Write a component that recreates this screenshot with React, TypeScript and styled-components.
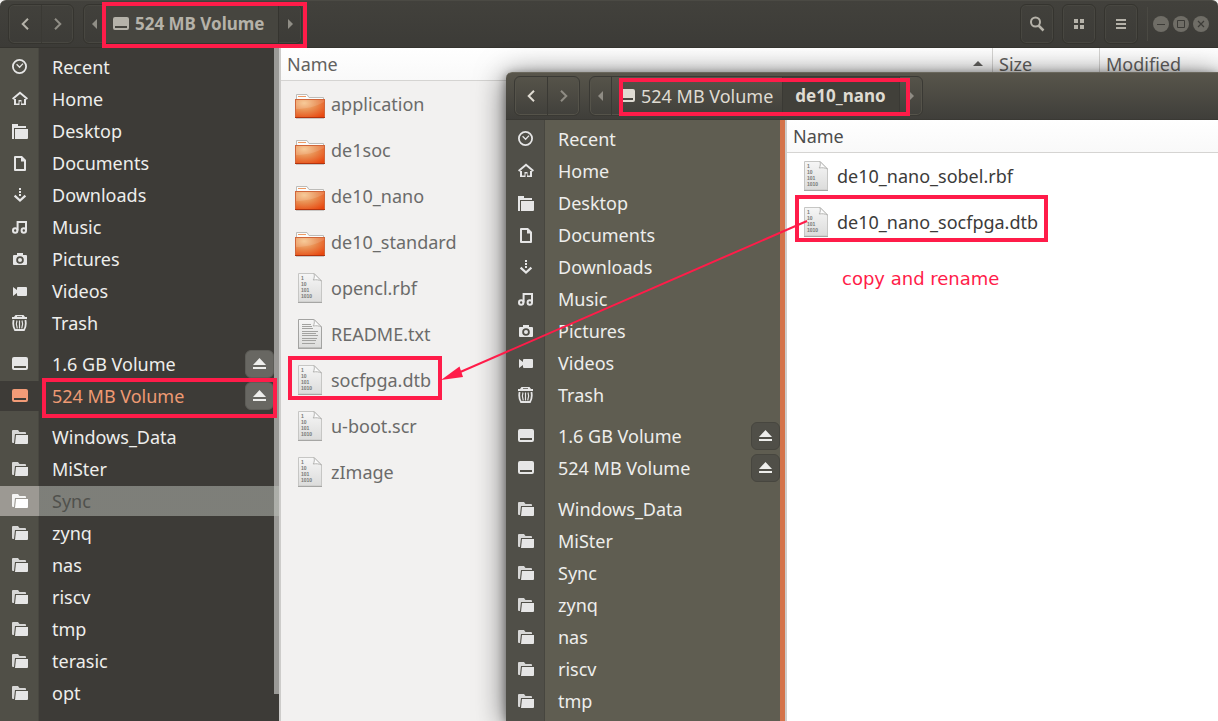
import React from "react";
import styled, { createGlobalStyle, css } from "styled-components";

const RED = "#ff1c49";

const GlobalStyle = createGlobalStyle`
  *, *::before, *::after { box-sizing: border-box; }
  body {
    margin: 0;
    font-family: "Noto Sans", "Open Sans", sans-serif;
    font-size: 18px;
    line-height: 24px;
    background: #f2f1f0;
  }
  button { font: inherit; color: inherit; border: 0; padding: 0; background: none; }
  ul { list-style: none; margin: 0; padding: 0; }
  a { color: inherit; text-decoration: none; }
  svg { display: block; flex: none; }
`;

type Tone = "back" | "front";

const tones = {
  back: {
    header: "linear-gradient(#42413c, #3c3b37)",
    headerTop: "#4b4a44",
    headerText: "#b5b2a9",
    headerDim: "#908e86",
    line: "#35342f",
    glow: "#484741",
    active: "#46453f",
    rail: "#504f47",
    railLine: "#484740",
    side: "#3d3b37",
    eject: "#686762",
    ejectLine: "#5d5c57",
    scroll: "#9b9a97",
    list: "#f2f1f0",
    fileText: "#6b6b6a",
    columnText: "#62615f",
  },
  front: {
    header: "linear-gradient(#58554b, #3f3e3a)",
    headerTop: "#6a675c",
    headerText: "#dfdbd2",
    headerDim: "#8f8c84",
    line: "#3a3934",
    glow: "#55534a",
    active: "#41403a",
    rail: "#504f48",
    railLine: "#47463f",
    side: "#5f5d51",
    eject: "#504f48",
    ejectLine: "#47463f",
    scroll: "#d4734a",
    list: "#ffffff",
    fileText: "#3c3b3a",
    columnText: "#4c4c4c",
  },
};

const Desktop = styled.main`
  position: relative;
  height: 100vh;
  overflow: hidden;
`;

const Window = styled.section<{ $tone: Tone }>`
  display: flex;
  flex-direction: column;
  height: 100%;
  ${(p) =>
    p.$tone === "front" &&
    css`
      position: absolute;
      top: 72px;
      left: 506px;
      right: 0;
      bottom: 0;
      height: auto;
      border-top-left-radius: 6px;
      box-shadow: 0 4px 30px rgba(0, 0, 0, 0.6), 0 2px 10px rgba(0, 0, 0, 0.4);
    `}
`;

const HeaderBar = styled.header<{ $tone: Tone }>`
  display: flex;
  align-items: center;
  gap: 9px;
  flex: none;
  height: 48px;
  padding: 0 9px 0 8px;
  color: ${(p) => tones[p.$tone].headerText};
  background: ${(p) => tones[p.$tone].header};
  border-top: 1px solid ${(p) => tones[p.$tone].headerTop};
  border-bottom: 1px solid ${(p) => tones[p.$tone].line};
  border-radius: 6px ${(p) => (p.$tone === "back" ? "6px" : "0")} 0 0;
`;

const ButtonGroup = styled.div<{ $tone: Tone }>`
  display: flex;
  height: 40px;
  border: 1px solid ${(p) => tones[p.$tone].line};
  border-radius: 6px;
  box-shadow: inset 0 0 0 1px ${(p) => tones[p.$tone].glow};
  overflow: hidden;
`;

const HeaderButton = styled.button<{ $tone: Tone; $dim?: boolean; $width?: number }>`
  display: flex;
  align-items: center;
  justify-content: center;
  width: ${(p) => p.$width ?? 32}px;
  color: ${(p) => (p.$dim ? tones[p.$tone].headerDim : "inherit")};
  & + & { border-left: 1px solid ${(p) => tones[p.$tone].line}; }
`;

const Crumb = styled.button<{ $tone: Tone; $active?: boolean; $drive?: boolean }>`
  display: flex;
  align-items: center;
  gap: 6px;
  padding: 0 9px 0 ${(p) => (p.$drive ? 7 : 12)}px;
  border-left: 1px solid ${(p) => tones[p.$tone].line};
  white-space: nowrap;
  ${(p) =>
    p.$active &&
    css`
      padding-right: 13px;
      border-right: 1px solid ${tones[p.$tone].line};
      font-size: 17px;
      font-weight: 700;
      background: ${tones[p.$tone].active};
    `}
`;

const Spacer = styled.div`
  flex: 1;
`;

const Tools = styled.div`
  display: flex;
  align-items: center;
  gap: 8px;
`;

const WindowControls = styled.div`
  display: flex;
  align-items: center;
  gap: 4px;
  padding-left: 5px;
  height: 34px;
  border-left: 1px solid #4a4943;
`;

const ControlButton = styled.button`
  display: flex;
  align-items: center;
  justify-content: center;
  width: 16px;
  height: 16px;
  border-radius: 50%;
  color: #3c3b37;
  background: #6f6d66;
`;

const Body = styled.div`
  display: flex;
  flex: 1;
  min-height: 0;
`;

const Sidebar = styled.nav<{ $tone: Tone }>`
  position: relative;
  flex: none;
  width: 281px;
  padding-top: 4px;
  overflow: hidden;
  border-right: 2px solid #cdccca;
  color: #eeeeec;
  background: ${(p) => {
    const t = tones[p.$tone];
    return `linear-gradient(to right, ${t.rail} 38px, ${t.railLine} 38px, ${t.railLine} 39px, ${t.side} 39px)`;
  }};
`;

const ScrollThumb = styled.div<{ $tone: Tone }>`
  position: absolute;
  top: 0;
  right: 0;
  width: 5px;
  height: ${(p) => (p.$tone === "back" ? "96%" : "100%")};
  background: ${(p) => tones[p.$tone].scroll};
`;

const PlaceGroup = styled.ul`
  position: relative;
  display: flex;
  flex-direction: column;
  gap: 2px;
  margin-bottom: 11px;
`;

const PlaceRow = styled.li<{ $state?: "active" | "target" }>`
  display: flex;
  align-items: center;
  height: 30px;
  padding-right: 5px;
  ${(p) => p.$state === "active" && `color: #ee9a73;`}
  ${(p) =>
    p.$state === "target" &&
    `background: linear-gradient(to right, #9c9993 39px, rgba(190, 194, 187, 0.5) 39px);`}
`;

const PlaceLink = styled.a<{ $state?: "active" | "target" }>`
  display: flex;
  align-items: center;
  flex: 1;
  gap: 13px;
  height: 30px;
  ${(p) => p.$state === "target" && `color: #50514d;`}
`;

const PlaceIcon = styled.span<{ $state?: "active" | "target" }>`
  display: flex;
  align-items: center;
  width: 39px;
  height: 30px;
  padding-left: 12px;
  color: ${(p) => (p.$state === "active" ? "#f29b77" : p.$state === "target" ? "#ffffff" : "#e6e6e6")};
  ${(p) => p.$state === "active" && `background: #3d3b37;`}
`;

const EjectButton = styled.button<{ $tone: Tone }>`
  display: flex;
  align-items: center;
  justify-content: center;
  width: 29px;
  height: 28px;
  border: 1px solid ${(p) => tones[p.$tone].ejectLine};
  border-radius: 6px;
  background: ${(p) => tones[p.$tone].eject};
`;

const FilePane = styled.div<{ $tone: Tone }>`
  flex: 1;
  min-width: 0;
  background: ${(p) => tones[p.$tone].list};
`;

const FileTable = styled.table<{ $tone: Tone }>`
  width: 100%;
  table-layout: fixed;
  border-collapse: separate;
  border-spacing: 0;
  color: ${(p) => tones[p.$tone].fileText};
`;

const ColumnHead = styled.th<{ $tone: Tone; $width?: number }>`
  width: ${(p) => (p.$width ? `${p.$width}px` : "auto")};
  height: 33px;
  padding: 0 6px;
  font-weight: 400;
  text-align: left;
  color: ${(p) => tones[p.$tone].columnText};
  background: linear-gradient(#ffffff, #f9f9f9);
  border-bottom: 1px solid #d5d4d2;
  & + & { border-left: 1px solid #d5d4d2; }
`;

const HeadContent = styled.div`
  display: flex;
  align-items: center;
  justify-content: space-between;
  padding-right: 3px;
`;

const FileCell = styled.td`
  height: 46px;
  padding: 0 0 0 14px;
`;

const FileName = styled.div`
  display: flex;
  align-items: center;
  gap: 6px;
  white-space: nowrap;
`;

const FileIconBox = styled.span`
  display: flex;
  justify-content: center;
  width: 30px;
`;

const Annotations = styled.div`
  position: absolute;
  inset: 0;
  pointer-events: none;
`;

const Frame = styled.div<{ $x: number; $y: number; $w: number; $h: number }>`
  position: absolute;
  left: ${(p) => p.$x}px;
  top: ${(p) => p.$y}px;
  width: ${(p) => p.$w}px;
  height: ${(p) => p.$h}px;
  border: 4px solid ${RED};
`;

const Arrow = styled.svg`
  position: absolute;
  left: 440px;
  top: 216px;
`;

const Note = styled.p`
  position: absolute;
  left: 842px;
  top: 267px;
  margin: 0;
  font-family: "DejaVu Sans", sans-serif;
  color: ${RED};
  white-space: nowrap;
`;

const Icon = ({ children }: { children: React.ReactNode }) => (
  <svg width="16" height="16" viewBox="0 0 16 16" fill="currentColor" aria-hidden="true">
    {children}
  </svg>
);

const DriveShape = () => (
  <path
    fillRule="evenodd"
    d="M2 1h12a2 2 0 0 1 2 2v9a2 2 0 0 1-2 2H2a2 2 0 0 1-2-2V3a2 2 0 0 1 2-2zM2 10v2h12v-2z"
  />
);

const placeShapes: Record<string, React.ReactNode> = {
  recent: (
    <g fill="none" stroke="currentColor">
      <circle cx="7.500" cy="7.500" r="6.600" strokeWidth="1.800" />
      <path d="M4.600 5.200l3 3 3.400-3.600" strokeWidth="1.300" />
    </g>
  ),
  home: (
    <g>
      <path d="M.6 8L8 1.700 15.400 8" fill="none" stroke="currentColor" strokeWidth="2" />
      <path d="M2 8h2v4.500h2.500V9h3v3.500H12V8h2v6H9V10.500H7.500V14H2z" />
    </g>
  ),
  desktop: <path d="M0 1h6v2h8v2H2v11H0zM3 6h13v9a1 1 0 0 1-1 1H3z" />,
  documents: (
    <path fillRule="evenodd" d="M3 1h7l4 4v10a1 1 0 0 1-1 1H3a1 1 0 0 1-1-1V2a1 1 0 0 1 1-1zm1 2v11h8V6.500H9V3z" />
  ),
  downloads: (
    <g>
      <path d="M7 1h2v2H7zM7 4h2v2H7zM7 7h2v2H7z" />
      <path d="M2.600 8.600L8 13.600l5.400-5" fill="none" stroke="currentColor" strokeWidth="2.200" />
    </g>
  ),
  music: (
    <g fill="none" stroke="currentColor" strokeWidth="2">
      <circle cx="3.200" cy="11.500" r="2.200" />
      <circle cx="11.800" cy="11.500" r="2.200" />
      <path d="M5.600 11.500V3h8.400v8.500" />
    </g>
  ),
  pictures: (
    <path
      fillRule="evenodd"
      d="M5 2h6v2h3a1 1 0 0 1 1 1v8a1 1 0 0 1-1 1H2a1 1 0 0 1-1-1V5a1 1 0 0 1 1-1h3zM8 5.200a3.800 3.800 0 1 0 0 7.600 3.800 3.800 0 0 0 0-7.600zM8 7a2 2 0 1 1 0 4 2 2 0 0 1 0-4z"
    />
  ),
  videos: <path d="M1 4l4 3V5a1 1 0 0 1 1-1h8a1 1 0 0 1 1 1v7a1 1 0 0 1-1 1H6a1 1 0 0 1-1-1v-2l-4 3z" />,
  trash: (
    <g>
      <path d="M3.500 0h8L13 2h2v2H0V2h2zM5 1.200v.8h5v-.8z" fillRule="evenodd" />
      <path
        d="M1.600 5c-.8 4-.2 7.500 1.400 10h9c1.600-2.500 2.200-6 1.400-10"
        fill="none"
        stroke="currentColor"
        strokeWidth="1.800"
      />
      <path
        d="M5 5.500c-1 2.500-.8 5.500.3 8M7.500 5.500v8M10 5.500c1 2.500.8 5.500-.3 8"
        fill="none"
        stroke="currentColor"
        strokeWidth="1.200"
      />
    </g>
  ),
  drive: <DriveShape />,
  folder: (
    <g>
      <path d="M1 1h5l1.500 2H13a1 1 0 0 1 1 1v1H3L2 14H1a1 1 0 0 1-1-1V2a1 1 0 0 1 1-1z" opacity=".9" />
      <path d="M4 6h12v8a1 1 0 0 1-1 1H3z" />
    </g>
  ),
};

const EjectIcon = () => (
  <svg width="13" height="12" viewBox="0 0 13 12" fill="#eeeeec" aria-hidden="true">
    <path d="M6.500 0L13 7H0zM0 9h13v2H0z" />
  </svg>
);

const Chevron = ({ right }: { right?: boolean }) => (
  <svg width="8" height="12" viewBox="0 0 8 12" fill="none" stroke="currentColor" strokeWidth="2" aria-hidden="true">
    <path d={right ? "M1 .7L6.300 6 1 11.300" : "M7 .7L1.700 6 7 11.300"} />
  </svg>
);

const Triangle = ({ right, up }: { right?: boolean; up?: boolean }) => (
  <svg width="10" height="10" viewBox="0 0 10 10" fill="currentColor" aria-hidden="true">
    <path d={up ? "M5 2l5 5H0z" : right ? "M3 0l5 5-5 5z" : "M7 0L2 5l5 5z"} />
  </svg>
);

const FolderIcon = () => (
  <svg width="30" height="30" viewBox="0 -4 30 30" aria-hidden="true">
    <defs>
      <radialGradient id="folderFill" cx="0.3" cy="0.2" r="0.95">
        <stop offset="0" stopColor="#f6c38a" />
        <stop offset="0.45" stopColor="#e98d50" />
        <stop offset="1" stopColor="#e8470f" />
      </radialGradient>
    </defs>
    <path d="M1.500 7V1.500H12l2 3h14.500V7" fill="#fcfcfb" stroke="#bdbcb9" />
    <path d="M3 3.500h8" stroke="#ee9a63" />
    <rect x="0.500" y="6.500" width="29" height="18" fill="url(#folderFill)" stroke="#d0663a" />
    <path d="M1 16c9 0 19-2 28-7V7H1z" fill="#fff" opacity=".13" />
    <path d="M0 24.500h30" stroke="#b3330d" />
    <path d="M1 25.500h28" stroke="#c9c7c5" />
  </svg>
);

const FileIcon = ({ text }: { text?: boolean }) => (
  <svg width="24" height="30" viewBox="0 0 24 30" aria-hidden="true">
    <defs>
      <linearGradient id="paper" x1="0" y1="0" x2="0" y2="1">
        <stop offset="0" stopColor="#f6f6f6" />
        <stop offset="1" stopColor="#dcdcdb" />
      </linearGradient>
    </defs>
    <path d="M.5.500H16L23.500 8v21H.5z" fill="url(#paper)" stroke={text ? "#a3a3a1" : "#c6c6c4"} />
    <path d="M0 29.500h24" stroke="#a6a6a4" />
    <path d="M16 .5c.6 2.500.4 4.500-.8 6.500 3 -.5 5.500-.3 8.300 1z" fill="#fbfbfb" stroke="#b4b4b2" />
    {text ? (
      <path
        d="M4 5.500h9M4 7.500h10M4 9.500h11M4 12.500h16M4 14.500h14M4 16.500h16M4 19.500h15M4 21.500h14M4 24.500h13"
        stroke="#a2a2a0"
      />
    ) : (
      <g fill="#777775" fontFamily="Liberation Sans, sans-serif" fontSize="5" fontWeight="700">
        <text x="3" y="7">1</text>
        <text x="3" y="13">10</text>
        <text x="3" y="19">101</text>
        <text x="3" y="25">1010</text>
      </g>
    )}
  </svg>
);

type Place = { label: string; icon: string; state?: "active" | "target"; eject?: boolean };

const standardPlaces: Place[] = [
  { label: "Recent", icon: "recent" },
  { label: "Home", icon: "home" },
  { label: "Desktop", icon: "desktop" },
  { label: "Documents", icon: "documents" },
  { label: "Downloads", icon: "downloads" },
  { label: "Music", icon: "music" },
  { label: "Pictures", icon: "pictures" },
  { label: "Videos", icon: "videos" },
  { label: "Trash", icon: "trash" },
];

const volumes = (mounted: boolean): Place[] => [
  { label: "1.6 GB Volume", icon: "drive", eject: true },
  { label: "524 MB Volume", icon: "drive", eject: true, state: mounted ? "active" : undefined },
];

const bookmarks = (names: string[], target?: string): Place[] =>
  names.map((label) => ({ label, icon: "folder", state: label === target ? "target" : undefined }));

const Places = ({ tone, groups }: { tone: Tone; groups: Place[][] }) => (
  <Sidebar $tone={tone}>
    <ScrollThumb $tone={tone} />
    {groups.map((group, i) => (
      <PlaceGroup key={i}>
        {group.map((p) => (
          <PlaceRow key={p.label} $state={p.state}>
            <PlaceLink href="#" $state={p.state}>
              <PlaceIcon $state={p.state}>
                <Icon>{placeShapes[p.icon]}</Icon>
              </PlaceIcon>
              {p.label}
            </PlaceLink>
            {p.eject && (
              <EjectButton $tone={tone} aria-label={`Eject ${p.label}`}>
                <EjectIcon />
              </EjectButton>
            )}
          </PlaceRow>
        ))}
      </PlaceGroup>
    ))}
  </Sidebar>
);

type Crumbs = { label: string; drive?: boolean; active?: boolean }[];

const Navigation = ({ tone, crumbs }: { tone: Tone; crumbs: Crumbs }) => (
  <>
    <ButtonGroup $tone={tone}>
      <HeaderButton $tone={tone} aria-label="Back">
        <Chevron />
      </HeaderButton>
      <HeaderButton $tone={tone} $dim aria-label="Forward">
        <Chevron right />
      </HeaderButton>
    </ButtonGroup>
    <ButtonGroup $tone={tone}>
      <HeaderButton $tone={tone} $dim $width={21} aria-label="Scroll path left">
        <Triangle />
      </HeaderButton>
      {crumbs.map((c) => (
        <Crumb key={c.label} $tone={tone} $active={c.active} $drive={c.drive}>
          {c.drive && (
            <Icon>
              <DriveShape />
            </Icon>
          )}
          {c.label}
        </Crumb>
      ))}
      <HeaderButton $tone={tone} $dim $width={22} aria-label="Scroll path right">
        <Triangle right />
      </HeaderButton>
    </ButtonGroup>
  </>
);

type FileEntry = { name: string; kind: "folder" | "binary" | "text" };

const Files = ({ tone, files, columns = [] }: { tone: Tone; files: FileEntry[]; columns?: [string, number][] }) => (
  <FilePane $tone={tone}>
    <FileTable $tone={tone}>
      <thead>
        <tr>
          <ColumnHead $tone={tone}>
            <HeadContent>
              Name
              {columns.length > 0 && <Triangle up />}
            </HeadContent>
          </ColumnHead>
          {columns.map(([label, width]) => (
            <ColumnHead key={label} $tone={tone} $width={width}>
              {label}
            </ColumnHead>
          ))}
        </tr>
      </thead>
      <tbody>
        {files.map((f) => (
          <tr key={f.name}>
            <FileCell colSpan={1 + columns.length}>
              <FileName>
                <FileIconBox>{f.kind === "folder" ? <FolderIcon /> : <FileIcon text={f.kind === "text"} />}</FileIconBox>
                {f.name}
              </FileName>
            </FileCell>
          </tr>
        ))}
      </tbody>
    </FileTable>
  </FilePane>
);

const volumeFiles: FileEntry[] = [
  { name: "application", kind: "folder" },
  { name: "de1soc", kind: "folder" },
  { name: "de10_nano", kind: "folder" },
  { name: "de10_standard", kind: "folder" },
  { name: "opencl.rbf", kind: "binary" },
  { name: "README.txt", kind: "text" },
  { name: "socfpga.dtb", kind: "binary" },
  { name: "u-boot.scr", kind: "binary" },
  { name: "zImage", kind: "binary" },
];

const nanoFiles: FileEntry[] = [
  { name: "de10_nano_sobel.rbf", kind: "binary" },
  { name: "de10_nano_socfpga.dtb", kind: "binary" },
];

export default function App() {
  return (
    <Desktop>
      <GlobalStyle />
      <Window $tone="back">
        <HeaderBar $tone="back">
          <Navigation tone="back" crumbs={[{ label: "524 MB Volume", drive: true, active: true }]} />
          <Spacer />
          <Tools>
            <ButtonGroup $tone="back">
              <HeaderButton $tone="back" aria-label="Search">
                <Icon>
                  <g fill="none" stroke="currentColor">
                    <circle cx="6.500" cy="6" r="4.500" strokeWidth="2" />
                    <path d="M9.500 9.500l5 5" strokeWidth="2.500" />
                  </g>
                </Icon>
              </HeaderButton>
            </ButtonGroup>
            <ButtonGroup $tone="back">
              <HeaderButton $tone="back" aria-label="Icon view">
                <Icon>
                  <path d="M3 3h4v4H3zM9 3h4v4H9zM3 9h4v4H3zM9 9h4v4H9z" />
                </Icon>
              </HeaderButton>
            </ButtonGroup>
            <ButtonGroup $tone="back">
              <HeaderButton $tone="back" aria-label="Menu">
                <Icon>
                  <path d="M3 3h10v2H3zM3 7h10v2H3zM3 11h10v2H3z" />
                </Icon>
              </HeaderButton>
            </ButtonGroup>
          </Tools>
          <WindowControls>
            <ControlButton aria-label="Minimize">
              <Icon>
                <path d="M4 8h8v1H4z" />
              </Icon>
            </ControlButton>
            <ControlButton aria-label="Maximize">
              <Icon>
                <path d="M4.500 4.500h7v7h-7z" fill="none" stroke="currentColor" />
              </Icon>
            </ControlButton>
            <ControlButton aria-label="Close">
              <Icon>
                <path d="M5 5l6 6M11 5l-6 6" fill="none" stroke="currentColor" strokeWidth="1.200" />
              </Icon>
            </ControlButton>
          </WindowControls>
        </HeaderBar>
        <Body>
          <Places
            tone="back"
            groups={[
              standardPlaces,
              volumes(true),
              bookmarks(["Windows_Data", "MiSter", "Sync", "zynq", "nas", "riscv", "tmp", "terasic", "opt"], "Sync"),
            ]}
          />
          <Files tone="back" files={volumeFiles} columns={[["Size", 107], ["Modified", 119]]} />
        </Body>
      </Window>

      <Window $tone="front">
        <HeaderBar $tone="front">
          <Navigation
            tone="front"
            crumbs={[
              { label: "524 MB Volume", drive: true },
              { label: "de10_nano", active: true },
            ]}
          />
        </HeaderBar>
        <Body>
          <Places
            tone="front"
            groups={[
              standardPlaces,
              volumes(false),
              bookmarks(["Windows_Data", "MiSter", "Sync", "zynq", "nas", "riscv", "tmp"]),
            ]}
          />
          <Files tone="front" files={nanoFiles} />
        </Body>
      </Window>

      <Annotations>
        <Frame $x={102} $y={2} $w={205} $h={46} />
        <Frame $x={42} $y={378} $w={235} $h={40} />
        <Frame $x={288} $y={356} $w={154} $h={44} />
        <Frame $x={619} $y={78} $w={291} $h={38} />
        <Frame $x={795} $y={195} $w={253} $h={47} />
        <Arrow width="370" height="170" viewBox="440 216 370 170" aria-hidden="true">
          <path d="M807 221L458 373" stroke={RED} strokeWidth="2" />
          <path d="M441 380L459.500 366.500L463 377z" fill={RED} />
        </Arrow>
        <Note>copy and rename</Note>
      </Annotations>
    </Desktop>
  );
}
